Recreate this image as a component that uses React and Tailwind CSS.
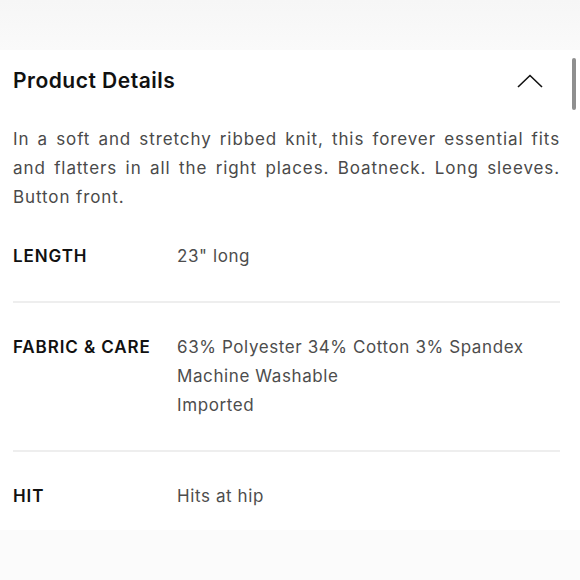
import React from 'react';

const details = [
  { label: 'LENGTH', values: ['23" long'] },
  {
    label: 'FABRIC & CARE',
    values: ['63% Polyester 34% Cotton 3% Spandex', 'Machine Washable', 'Imported'],
  },
  { label: 'HIT', values: ['Hits at hip'] },
];

const ChevronUp = () => (
  <svg width="26" height="14" viewBox="0 0 26 14" fill="none">
    <path d="M1 13 L13 1.5 L25 13" stroke="#111" strokeWidth="1.6" />
  </svg>
);

export default function App() {
  return (
    <div
      className="w-[580px] h-[580px] overflow-hidden bg-[#fbfbfb] flex flex-col"
      style={{ fontFamily: 'Inter, "Noto Sans", sans-serif' }}
    >
      {/* faded area above the panel */}
      <div className="h-[50px] shrink-0 bg-gradient-to-b from-[#f6f6f6] to-[#fafafa]" />

      <div className="relative h-[480px] shrink-0 overflow-hidden bg-white px-[13px]">
        {/* scrollbar thumb */}
        <div className="absolute right-[4px] top-[8px] w-[4px] h-[52px] rounded-full bg-[#8f8f8f]" />

        {/* Header */}
        <div className="h-[61px] flex items-center justify-between pr-[24px]">
          <h2 className="text-[21px] font-semibold text-[#111] tracking-[0.5px]">Product Details</h2>
          <ChevronUp />
        </div>

        {/* Description */}
        <p className="mt-[14px] text-[17px] leading-[29px] text-[#4a4a4a] text-justify tracking-[0.9px] pr-[7px]">
          In a soft and stretchy ribbed knit, this forever essential fits and flatters in all the right places. Boatneck. Long sleeves. Button front.
        </p>

        {/* Spec rows */}
        <div className="pr-[7px]">
          {details.map((row, i) => (
            <div
              key={row.label}
              className={`flex py-[30px] ${i < details.length - 1 ? 'border-b-2 border-[#eeeeee]' : ''}`}
            >
              <div className="w-[164px] shrink-0 text-[17px] leading-[29px] font-semibold text-[#111] tracking-[0.9px]">
                {row.label}
              </div>
              <div className="text-[17px] leading-[29px] text-[#4d4d4d] tracking-[0.6px]">
                {row.values.map((v) => (
                  <div key={v}>{v}</div>
                ))}
              </div>
            </div>
          ))}
        </div>
      </div>
    </div>
  );
}
